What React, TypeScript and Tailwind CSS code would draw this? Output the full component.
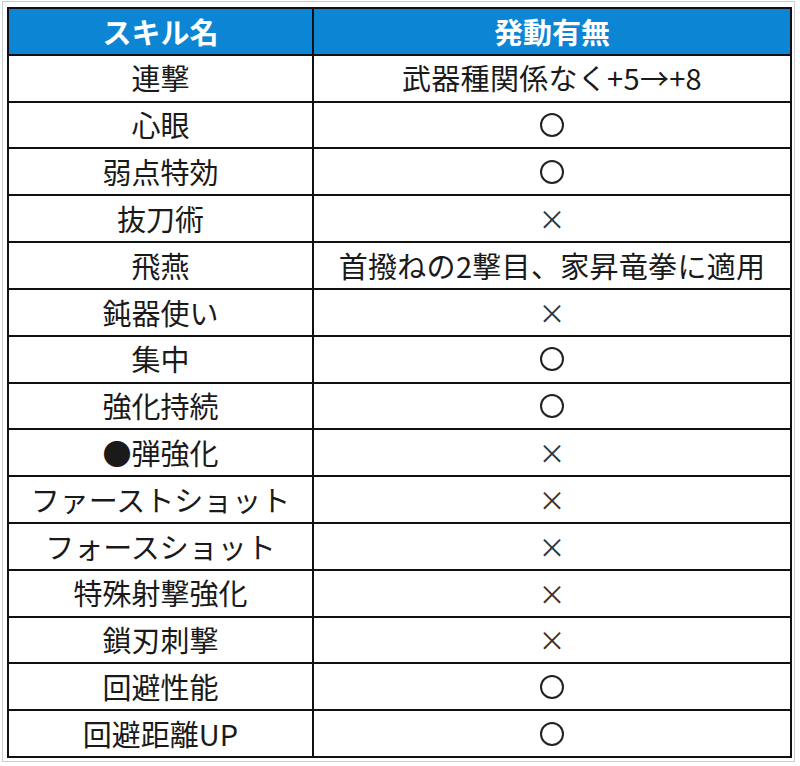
const rows: [string, string][] = [
  ["連撃", "武器種関係なく+5→+8"],
  ["心眼", "○"],
  ["弱点特効", "○"],
  ["抜刀術", "×"],
  ["飛燕", "首撥ねの2撃目、家昇竜拳に適用"],
  ["鈍器使い", "×"],
  ["集中", "○"],
  ["強化持続", "○"],
  ["●弾強化", "×"],
  ["ファーストショット", "×"],
  ["フォースショット", "×"],
  ["特殊射撃強化", "×"],
  ["鎖刃刺撃", "×"],
  ["回避性能", "○"],
  ["回避距離UP", "○"],
];

function Mark({ value }: { value: string }) {
  if (value === "○") {
    return <span className="inline-block h-[24px] w-[24px] rounded-full border-[2px] border-[#222]" />;
  }
  if (value === "×") {
    return <span className="text-[27px] leading-none text-[#333]">×</span>;
  }
  return <span className="tracking-[0.3px]">{value}</span>;
}

export default function App() {
  return (
    <div
      className="h-[766px] w-[800px] bg-white pl-[2px] pt-[1px]"
      style={{ fontFamily: '"Noto Sans CJK JP", "Noto Sans", sans-serif' }}
    >
      <div className="h-[761px] w-[793px] border border-[#cccccc] pl-[4px] pt-[5px]">
        <div className="grid h-[751px] w-[785px] grid-cols-[303px_1fr] grid-rows-[repeat(16,1fr)] gap-[2px] bg-[#111] p-[2px]">
          <div className="flex items-center justify-center bg-[#0b85d4] text-[29px] font-bold text-white">
            スキル名
          </div>
          <div className="flex items-center justify-center bg-[#0b85d4] text-[29px] font-bold text-white">
            発動有無
          </div>
          {rows.map(([name, value]) => (
            <>
              <div key={name} className="flex items-center justify-center bg-white text-[29px] text-[#1a1a1a]">
                {name}
              </div>
              <div key={name + "-v"} className="flex items-center justify-center bg-white text-[29px] text-[#1a1a1a]">
                <Mark value={value} />
              </div>
            </>
          ))}
        </div>
      </div>
    </div>
  );
}
